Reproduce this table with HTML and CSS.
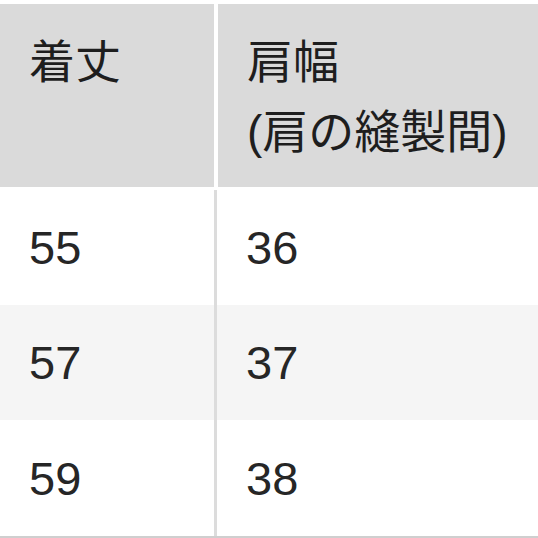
FILE: index.html
```html
<!DOCTYPE html>
<html lang="ja">
<head>
<meta charset="utf-8">
<title>サイズ表</title>
<link rel="stylesheet" href="styles.css">
</head>
<body>
<div class="table">
  <div class="head">
    <div class="hcell hcell-left">着丈</div>
    <div class="hcell hcell-right">肩幅<br>(肩の縫製間)</div>
  </div>
  <div class="row">
    <div class="cell cell-left">55</div>
    <div class="cell cell-right">36</div>
  </div>
  <div class="row row-alt">
    <div class="cell cell-left">57</div>
    <div class="cell cell-right">37</div>
  </div>
  <div class="row row-last">
    <div class="cell cell-left">59</div>
    <div class="cell cell-right">38</div>
  </div>
</div>
</body>
</html>
```
FILE: styles.css
```css
html, body {
  margin: 0;
  padding: 0;
  background: #ffffff;
}
body {
  width: 538px;
  height: 538px;
  overflow: hidden;
  font-family: "Liberation Sans", "Noto Sans CJK JP", sans-serif;
  color: #1e1e1e;
}
.table {
  display: flex;
  flex-direction: column;
  padding-top: 4px;
}
.head {
  display: flex;
  gap: 4px;
  height: 183px;
  margin-bottom: 3px;
}
.hcell {
  background: #dadada;
  font-size: 46px;
  line-height: 70px;
  padding: 23px 0 0 29px;
  box-sizing: border-box;
}
.hcell-left {
  width: 214px;
}
.hcell-right {
  flex: 1;
}
.row {
  display: flex;
  height: 115px;
}
.row-alt {
  background: #f5f5f5;
}
.row-last {
  height: 116px;
  border-bottom: 3px solid #cfcfcf;
}
.cell {
  display: flex;
  align-items: center;
  font-size: 47px;
  padding-left: 29px;
  box-sizing: border-box;
  color: #262626;
}
.cell-left {
  width: 217px;
  border-right: 3px solid #dcdcdc;
}
.cell-right {
  flex: 1;
}
```
